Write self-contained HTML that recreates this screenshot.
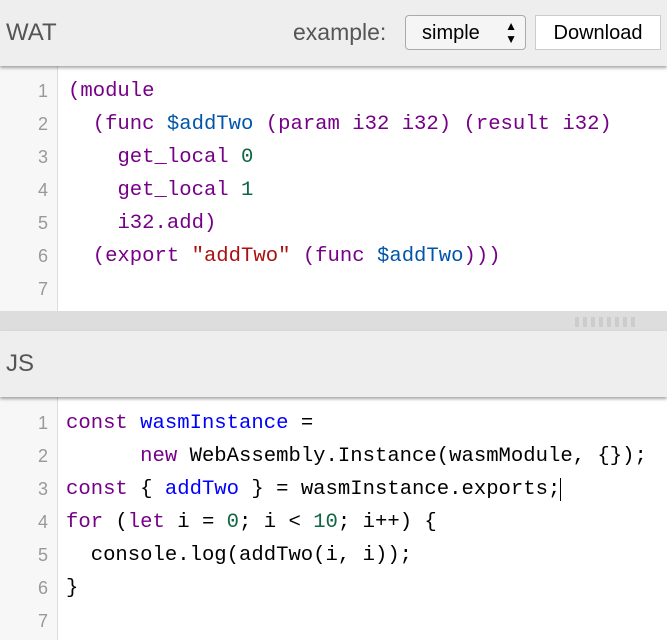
<!DOCTYPE html><html><head><style>
body{margin:0;width:667px;height:640px;overflow:hidden;background:#fff;font-family:"Liberation Sans",sans-serif;position:relative}
.hdr{position:absolute;left:0;width:667px;height:66px;background:#eee;box-shadow:0 2px 3px rgba(0,0,0,.35);z-index:2}
.hdr .t{position:absolute;left:6px;top:19px;font-size:24px;color:#555}
.code{position:absolute;left:0;width:667px;font-family:"Liberation Mono",monospace;font-size:20.6px}
.gut{position:absolute;left:0;top:0;width:57px;height:100%;background:#f7f7f7;border-right:1px solid #ddd}
.ln{position:absolute;left:0;height:33px;line-height:33px;width:667px;white-space:pre}
.ln .n{position:absolute;width:48px;text-align:right;color:#999;font-size:18px;font-family:"Liberation Sans",sans-serif}
.ln .c{position:absolute;left:68px}
.k{color:#708}.v{color:#05a}.num{color:#164}.s{color:#a11}.d{color:#00f}
</style></head><body>
<div class="hdr" style="top:0"><div class="t">WAT</div>
<div style="position:absolute;left:293px;top:19px;font-size:23px;color:#555">example:</div>
<div style="position:absolute;left:405px;top:15px;width:121px;height:35px;border:1px solid #aaa;border-radius:4px;background:#f5f5f5;box-sizing:border-box;font-size:20px;line-height:34px;padding-left:16px">simple<span style="position:absolute;right:8px;font-size:12px;line-height:13px;top:4px">▲<br>▼</span></div>
<div style="position:absolute;left:535px;top:15px;width:126px;height:35px;border:1px solid #ccc;background:#fff;box-sizing:border-box;font-size:20px;line-height:34px;text-align:center">Download</div>
</div>
<div class="code" style="top:66px;height:245px"><div class="gut"></div>
<div class="ln" style="top:9px"><span class="n">1</span><span class="c"><span class="k">(module</span></span></div>
<div class="ln" style="top:42px"><span class="n">2</span><span class="c">  <span class="k">(func</span> <span class="v">$addTwo</span> <span class="k">(param i32 i32)</span> <span class="k">(result i32)</span></span></div>
<div class="ln" style="top:75px"><span class="n">3</span><span class="c">    <span class="k">get_local</span> <span class="num">0</span></span></div>
<div class="ln" style="top:108px"><span class="n">4</span><span class="c">    <span class="k">get_local</span> <span class="num">1</span></span></div>
<div class="ln" style="top:141px"><span class="n">5</span><span class="c">    <span class="k">i32.add)</span></span></div>
<div class="ln" style="top:174px"><span class="n">6</span><span class="c">  <span class="k">(export</span> <span class="s">"addTwo"</span> <span class="k">(func</span> <span class="v">$addTwo</span><span class="k">)))</span></span></div>
<div class="ln" style="top:207px"><span class="n">7</span></div>
</div>
<div style="position:absolute;top:311px;left:0;width:667px;height:20px;background:#ddd"><div style="position:absolute;left:575px;top:6px;width:60px;height:10px;background:repeating-linear-gradient(90deg,#ccc 0 4px,transparent 4px 8px)"></div></div>
<div class="hdr" style="top:331px"><div class="t">JS</div></div>
<div class="code" style="top:397px;height:243px"><div class="gut"></div>
<div class="ln" style="top:10px"><span class="n">1</span><span class="c" style="left:66px"><span class="k">const</span> <span class="d">wasmInstance</span> =</span></div>
<div class="ln" style="top:43px"><span class="n">2</span><span class="c" style="left:66px">      <span class="k">new</span> WebAssembly.Instance(wasmModule, {});</span></div>
<div class="ln" style="top:76px"><span class="n">3</span><span class="c" style="left:66px"><span class="k">const</span> { <span class="d">addTwo</span> } = wasmInstance.exports;<span style="border-left:1px solid #000"></span></span></div>
<div class="ln" style="top:109px"><span class="n">4</span><span class="c" style="left:66px"><span class="k">for</span> (<span class="k">let</span> i = <span class="num">0</span>; i &lt; <span class="num">10</span>; i++) {</span></div>
<div class="ln" style="top:142px"><span class="n">5</span><span class="c" style="left:66px">  console.log(addTwo(i, i));</span></div>
<div class="ln" style="top:175px"><span class="n">6</span><span class="c" style="left:66px">}</span></div>
<div class="ln" style="top:208px"><span class="n">7</span></div>
</div>
</body></html>
